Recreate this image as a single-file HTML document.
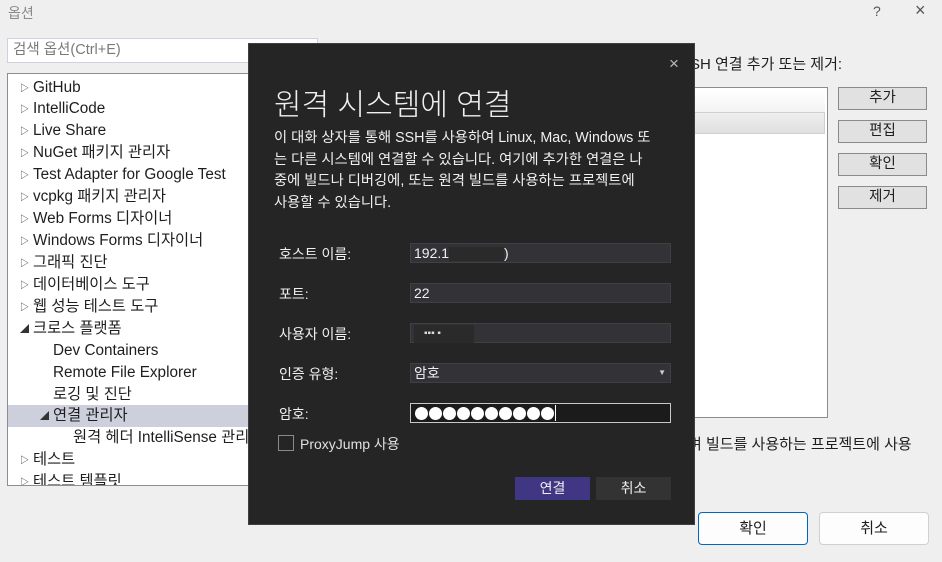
<!DOCTYPE html>
<html><head><meta charset="utf-8"><style>
*{margin:0;padding:0;box-sizing:border-box}
body{width:942px;height:562px;background:#efefef;position:relative;overflow:hidden;font-family:"Liberation Sans","Noto Sans CJK KR",sans-serif;font-size:14px;color:#1e1e1e}
.a{position:absolute;white-space:nowrap}
.tree div{position:absolute;left:0;height:22px;line-height:22px;font-size:15.3px;white-space:nowrap}
.tri{position:absolute;left:12px;top:0;font-size:9px;color:#333}
.rb{position:absolute;left:838px;width:89px;height:23px;background:#e1e1e1;border:1px solid #8a8a8a;text-align:center;line-height:21px;font-size:14.5px}
.lab{position:absolute;left:279px;color:#f0f0f0;font-size:14px}
.inp{position:absolute;left:410px;width:261px;height:20px;background:#333337;border:1px solid #3f3f46;color:#f0f0f0;font-size:14px;line-height:18px;padding-left:3px}
.d{display:inline-block;width:13px;height:13px;border-radius:50%;background:#fff;margin-right:1px;vertical-align:middle;margin-top:-2px}
</style></head><body>
<div class="a" style="left:8px;top:3px;color:#8a8a8a;font-size:14px">옵션</div>
<div class="a" style="left:873px;top:3px;color:#555;font-size:14px">?</div>
<div class="a" style="left:915px;top:0px;color:#555;font-size:18px">×</div>
<div class="a" style="left:7px;top:38px;width:311px;height:25px;background:#fff;border:1px solid #d0d0e0;color:#7a7a7a;font-size:14.5px;line-height:23px;padding-left:5px">검색 옵션(Ctrl+E)</div>
<div class="a tree" style="left:7px;top:73px;width:260px;height:413px;background:#fff;border:1px solid #8c8c96;overflow:hidden">
<div style="top:3px;width:260px"><span class="tri">▷</span><span style="position:absolute;left:25px">GitHub</span></div>
<div style="top:24px;width:260px"><span class="tri">▷</span><span style="position:absolute;left:25px">IntelliCode</span></div>
<div style="top:46px;width:260px"><span class="tri">▷</span><span style="position:absolute;left:25px">Live Share</span></div>
<div style="top:68px;width:260px"><span class="tri">▷</span><span style="position:absolute;left:25px">NuGet 패키지 관리자</span></div>
<div style="top:90px;width:260px"><span class="tri">▷</span><span style="position:absolute;left:25px">Test Adapter for Google Test</span></div>
<div style="top:112px;width:260px"><span class="tri">▷</span><span style="position:absolute;left:25px">vcpkg 패키지 관리자</span></div>
<div style="top:134px;width:260px"><span class="tri">▷</span><span style="position:absolute;left:25px">Web Forms 디자이너</span></div>
<div style="top:156px;width:260px"><span class="tri">▷</span><span style="position:absolute;left:25px">Windows Forms 디자이너</span></div>
<div style="top:178px;width:260px"><span class="tri">▷</span><span style="position:absolute;left:25px">그래픽 진단</span></div>
<div style="top:200px;width:260px"><span class="tri">▷</span><span style="position:absolute;left:25px">데이터베이스 도구</span></div>
<div style="top:222px;width:260px"><span class="tri">▷</span><span style="position:absolute;left:25px">웹 성능 테스트 도구</span></div>
<div style="top:244px;width:260px"><span class="tri">◢</span><span style="position:absolute;left:25px">크로스 플랫폼</span></div>
<div style="top:266px;width:260px"><span style="position:absolute;left:45px">Dev Containers</span></div>
<div style="top:288px;width:260px"><span style="position:absolute;left:45px">Remote File Explorer</span></div>
<div style="top:310px;width:260px"><span style="position:absolute;left:45px">로깅 및 진단</span></div>
<div style="top:331px;width:260px;background:#cdcfdc"><span class="tri" style="left:32px">◢</span><span style="position:absolute;left:45px">연결 관리자</span></div>
<div style="top:353px;width:260px"><span style="position:absolute;left:65px">원격 헤더 IntelliSense 관리자</span></div>
<div style="top:375px;width:260px"><span class="tri">▷</span><span style="position:absolute;left:25px">테스트</span></div>
<div style="top:397px;width:260px"><span class="tri">▷</span><span style="position:absolute;left:25px">테스트 템플릿</span></div>
</div>
<div class="a" style="left:690px;top:53px;font-size:15px">SH 연결 추가 또는 제거:</div>
<div class="a" style="left:690px;top:87px;width:138px;height:331px;background:#fff;border:1px solid #8c8c8c">
<div style="position:absolute;left:0;top:3px;width:134px;height:21px;background:linear-gradient(#fff,#f3f3f3)"></div>
<div style="position:absolute;left:0;top:24px;width:134px;height:22px;background:linear-gradient(#eee,#e0e0e0);border:1px solid #d0d0d0"></div>
</div>
<div class="rb" style="top:87px">추가</div>
<div class="rb" style="top:120px">편집</div>
<div class="rb" style="top:153px">확인</div>
<div class="rb" style="top:186px">제거</div>
<div class="a" style="left:688px;top:433px;font-size:15px">벼 빌드를 사용하는 프로젝트에 사용</div>
<div class="a" style="left:698px;top:512px;width:110px;height:33px;background:#fdfdfd;border:1px solid #0067c0;border-radius:4px;text-align:center;line-height:31px;font-size:15px">확인</div>
<div class="a" style="left:819px;top:512px;width:110px;height:33px;background:#fdfdfd;border:1px solid #d0d0d0;border-radius:4px;text-align:center;line-height:31px;font-size:15px">취소</div>

<div class="a" style="left:248px;top:43px;width:447px;height:482px;background:#252526;border:1px solid #3f3f3f">
<div class="a" style="left:420px;top:10px;color:#bbb;font-size:17px">×</div>
<div class="a" style="left:25px;top:36px;color:#f0f0f0;font-size:30px;font-weight:300">원격 시스템에 연결</div>
<div class="a" style="left:25px;top:84px;color:#f0f0f0;font-size:14.3px;line-height:21.7px">이 대화 상자를 통해 SSH를 사용하여 Linux, Mac, Windows 또<br>는 다른 시스템에 연결할 수 있습니다. 여기에 추가한 연결은 나<br>중에 빌드나 디버깅에, 또는 원격 빌드를 사용하는 프로젝트에<br>사용할 수 있습니다.</div>
</div>
<div class="lab" style="top:244px">호스트 이름:</div>
<div class="lab" style="top:284px">포트:</div>
<div class="lab" style="top:324px">사용자 이름:</div>
<div class="lab" style="top:364px">인증 유형:</div>
<div class="lab" style="top:404px">암호:</div>
<div class="inp" style="top:243px">192.1<span style="display:inline-block;width:55px;height:14px;background:#2a2a2a;vertical-align:middle"></span>)</div>
<div class="inp" style="top:283px">22</div>
<div class="inp" style="top:323px"><span style="display:inline-block;width:60px;height:18px;background:#2a2a2a;vertical-align:middle;color:#ddd;font-size:10px;line-height:18px;padding-left:10px">▪▪▪ ▪</span></div>
<div class="inp" style="top:363px">암호<span style="position:absolute;right:4px;top:0;font-size:8px;color:#ccc">▼</span></div>
<div class="inp" style="top:403px;background:#1b1b1b;border:1px solid #c8c8c8;padding-left:4px"><span class="d"></span><span class="d"></span><span class="d"></span><span class="d"></span><span class="d"></span><span class="d"></span><span class="d"></span><span class="d"></span><span class="d"></span><span class="d"></span><span style="display:inline-block;width:1px;height:16px;background:#fff;vertical-align:middle;margin-top:-2px"></span></div>
<div class="a" style="left:278px;top:435px;width:16px;height:16px;border:1px solid #8a8a8a"></div>
<div class="a" style="left:300px;top:434px;color:#e0e0e0;font-size:14px">ProxyJump 사용</div>
<div class="a" style="left:515px;top:477px;width:75px;height:23px;background:#3f3684;color:#f0f0f0;text-align:center;line-height:23px;font-size:14px">연결</div>
<div class="a" style="left:596px;top:477px;width:75px;height:23px;background:#333333;color:#f0f0f0;text-align:center;line-height:23px;font-size:14px">취소</div>
</body></html>
